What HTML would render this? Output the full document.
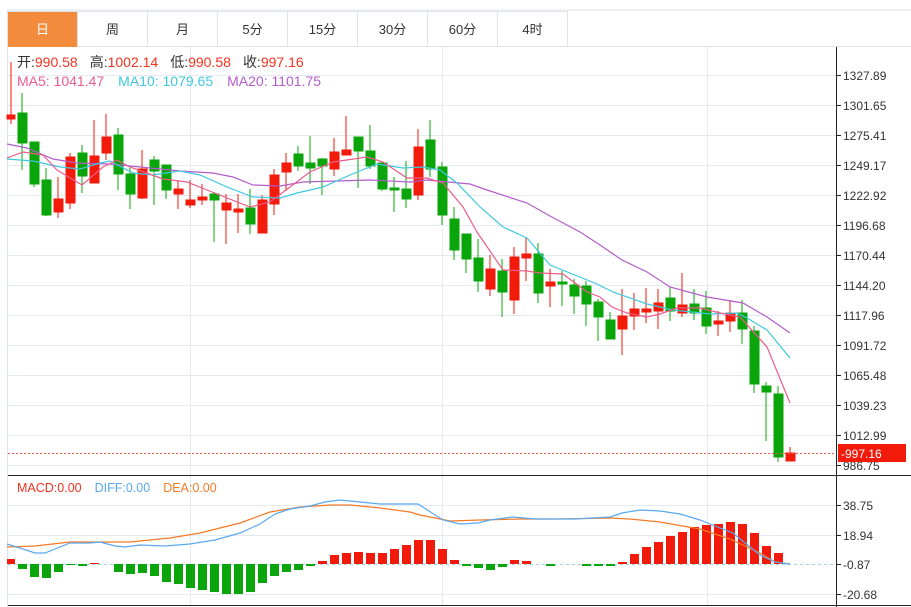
<!DOCTYPE html>
<html><head><meta charset="utf-8"><style>
html,body{margin:0;padding:0;background:#fff;width:911px;height:607px;overflow:hidden;font-family:"Liberation Sans","Noto Sans CJK SC",sans-serif}
.tabs{position:absolute;left:8px;top:11px;height:35px;display:flex;border-top:1px solid #dde3ea}
.tab{width:69px;height:35px;line-height:35px;text-align:center;font-size:13px;color:#333;border-right:1px solid #dde3ea}
.tab.on{background:#f28b3c;color:#fff}
</style></head><body>
<svg width="911" height="607" style="position:absolute;left:0;top:0">
<line x1="7" y1="10" x2="911" y2="10" stroke="#dde3ea"/>
<line x1="7.5" y1="10" x2="7.5" y2="607" stroke="#dde3ea"/>
<line x1="8" y1="46.5" x2="911" y2="46.5" stroke="#dde3ea"/>
<g stroke="#e3eaf1" stroke-width="1">
<line x1="190.5" y1="47" x2="190.5" y2="605"/><line x1="442.5" y1="47" x2="442.5" y2="605"/><line x1="707.5" y1="47" x2="707.5" y2="605"/>
<line x1="8" y1="75.5" x2="836" y2="75.5"/><line x1="8" y1="105.5" x2="836" y2="105.5"/><line x1="8" y1="135.5" x2="836" y2="135.5"/><line x1="8" y1="165.5" x2="836" y2="165.5"/><line x1="8" y1="195.5" x2="836" y2="195.5"/><line x1="8" y1="225.5" x2="836" y2="225.5"/><line x1="8" y1="255.5" x2="836" y2="255.5"/><line x1="8" y1="285.5" x2="836" y2="285.5"/><line x1="8" y1="315.5" x2="836" y2="315.5"/><line x1="8" y1="345.5" x2="836" y2="345.5"/><line x1="8" y1="375.5" x2="836" y2="375.5"/><line x1="8" y1="405.5" x2="836" y2="405.5"/><line x1="8" y1="435.5" x2="836" y2="435.5"/><line x1="8" y1="465.5" x2="836" y2="465.5"/>
<line x1="8" y1="505.5" x2="836" y2="505.5"/><line x1="8" y1="535.5" x2="836" y2="535.5"/><line x1="8" y1="594.5" x2="836" y2="594.5"/>
</g>
<g id="c">
<g fill="#f21a0a" stroke="#f21a0a">
<line x1="11" y1="62" x2="11" y2="124"/><rect x="7" y="115" width="8" height="4"/>
<line x1="58" y1="177" x2="58" y2="218"/><rect x="54" y="199" width="9" height="13"/>
<line x1="70" y1="153" x2="70" y2="209"/><rect x="66" y="157" width="9" height="46"/>
<line x1="94" y1="120" x2="94" y2="183"/><rect x="90" y="156" width="9" height="27"/>
<line x1="106" y1="114" x2="106" y2="160"/><rect x="102" y="137" width="9" height="16"/>
<line x1="142" y1="150" x2="142" y2="199"/><rect x="138" y="169" width="9" height="29"/>
<line x1="178" y1="180" x2="178" y2="209"/><rect x="174" y="189" width="9" height="5"/>
<line x1="190" y1="180" x2="190" y2="208"/><rect x="186" y="200" width="9" height="5"/>
<line x1="202" y1="184" x2="202" y2="205"/><rect x="198" y="197" width="9" height="3"/>
<line x1="226" y1="194" x2="226" y2="244"/><rect x="222" y="203" width="9" height="7"/>
<line x1="238" y1="194" x2="238" y2="233"/><rect x="234" y="209" width="9" height="3"/>
<line x1="262" y1="195" x2="262" y2="233"/><rect x="258" y="200" width="9" height="33"/>
<line x1="274" y1="169" x2="274" y2="215"/><rect x="270" y="175" width="9" height="29"/>
<line x1="286" y1="153" x2="286" y2="191"/><rect x="282" y="163" width="9" height="9"/>
<line x1="334" y1="138" x2="334" y2="176"/><rect x="330" y="152" width="9" height="17"/>
<line x1="346" y1="116" x2="346" y2="155"/><rect x="342" y="150" width="9" height="5"/>
<line x1="418" y1="129" x2="418" y2="200"/><rect x="414" y="147" width="9" height="48"/>
<line x1="490" y1="255" x2="490" y2="296"/><rect x="486" y="269" width="9" height="20"/>
<line x1="514" y1="247" x2="514" y2="314"/><rect x="510" y="257" width="9" height="43"/>
<line x1="526" y1="237" x2="526" y2="281"/><rect x="522" y="254" width="9" height="4"/>
<line x1="550" y1="269" x2="550" y2="307"/><rect x="546" y="282" width="9" height="4"/>
<line x1="622" y1="289" x2="622" y2="355"/><rect x="618" y="316" width="9" height="13"/>
<line x1="634" y1="293" x2="634" y2="330"/><rect x="630" y="309" width="9" height="7"/>
<line x1="646" y1="288" x2="646" y2="323"/><rect x="642" y="309" width="9" height="3"/>
<line x1="658" y1="289" x2="658" y2="329"/><rect x="654" y="303" width="9" height="8"/>
<line x1="682" y1="273" x2="682" y2="317"/><rect x="678" y="305" width="9" height="8"/>
<line x1="718" y1="311" x2="718" y2="336"/><rect x="714" y="321" width="9" height="3"/>
<line x1="730" y1="300" x2="730" y2="332"/><rect x="726" y="313" width="9" height="8"/>
<line x1="790" y1="447" x2="790" y2="461"/><rect x="786" y="453" width="9" height="8"/>
</g>
<g fill="#0aa50a" stroke="#0aa50a">
<line x1="22" y1="93" x2="22" y2="170"/><rect x="18" y="113" width="9" height="30"/>
<line x1="34" y1="142" x2="34" y2="187"/><rect x="30" y="142" width="9" height="42"/>
<line x1="46" y1="168" x2="46" y2="216"/><rect x="42" y="180" width="9" height="35"/>
<line x1="82" y1="145" x2="82" y2="193"/><rect x="78" y="153" width="9" height="23"/>
<line x1="118" y1="128" x2="118" y2="190"/><rect x="114" y="135" width="9" height="39"/>
<line x1="130" y1="168" x2="130" y2="209"/><rect x="126" y="174" width="9" height="20"/>
<line x1="154" y1="156" x2="154" y2="205"/><rect x="150" y="160" width="9" height="11"/>
<line x1="166" y1="165" x2="166" y2="199"/><rect x="162" y="165" width="9" height="25"/>
<line x1="214" y1="192" x2="214" y2="242"/><rect x="210" y="194" width="9" height="6"/>
<line x1="250" y1="189" x2="250" y2="234"/><rect x="246" y="208" width="9" height="16"/>
<line x1="298" y1="146" x2="298" y2="171"/><rect x="294" y="154" width="9" height="12"/>
<line x1="310" y1="136" x2="310" y2="184"/><rect x="306" y="163" width="9" height="5"/>
<line x1="322" y1="158" x2="322" y2="195"/><rect x="318" y="159" width="9" height="7"/>
<line x1="358" y1="137" x2="358" y2="188"/><rect x="354" y="137" width="9" height="14"/>
<line x1="370" y1="125" x2="370" y2="169"/><rect x="366" y="151" width="9" height="15"/>
<line x1="382" y1="163" x2="382" y2="191"/><rect x="378" y="163" width="9" height="26"/>
<line x1="394" y1="177" x2="394" y2="212"/><rect x="390" y="188" width="9" height="2"/>
<line x1="406" y1="161" x2="406" y2="208"/><rect x="402" y="189" width="9" height="10"/>
<line x1="430" y1="120" x2="430" y2="177"/><rect x="426" y="140" width="9" height="29"/>
<line x1="442" y1="162" x2="442" y2="225"/><rect x="438" y="167" width="9" height="48"/>
<line x1="454" y1="207" x2="454" y2="260"/><rect x="450" y="219" width="9" height="31"/>
<line x1="466" y1="234" x2="466" y2="273"/><rect x="462" y="234" width="9" height="25"/>
<line x1="478" y1="239" x2="478" y2="292"/><rect x="474" y="258" width="9" height="23"/>
<line x1="502" y1="259" x2="502" y2="317"/><rect x="498" y="271" width="9" height="21"/>
<line x1="538" y1="243" x2="538" y2="303"/><rect x="534" y="254" width="9" height="39"/>
<line x1="562" y1="271" x2="562" y2="306"/><rect x="558" y="282" width="9" height="2"/>
<line x1="574" y1="279" x2="574" y2="314"/><rect x="570" y="285" width="9" height="11"/>
<line x1="586" y1="281" x2="586" y2="326"/><rect x="582" y="286" width="9" height="18"/>
<line x1="598" y1="299" x2="598" y2="341"/><rect x="594" y="302" width="9" height="15"/>
<line x1="610" y1="312" x2="610" y2="339"/><rect x="606" y="320" width="9" height="19"/>
<line x1="670" y1="287" x2="670" y2="321"/><rect x="666" y="298" width="9" height="13"/>
<line x1="694" y1="289" x2="694" y2="320"/><rect x="690" y="304" width="9" height="9"/>
<line x1="706" y1="291" x2="706" y2="334"/><rect x="702" y="308" width="9" height="18"/>
<line x1="742" y1="300" x2="742" y2="344"/><rect x="738" y="313" width="9" height="16"/>
<line x1="754" y1="326" x2="754" y2="393"/><rect x="750" y="331" width="9" height="53"/>
<line x1="766" y1="382" x2="766" y2="441"/><rect x="762" y="386" width="9" height="6"/>
<line x1="778" y1="386" x2="778" y2="462"/><rect x="774" y="394" width="9" height="63"/>
</g>
</g>
<g fill="none" stroke-width="1.2">
<polyline stroke="#b45ccb" points="7,144 27,148 53,159 77,163 110,164 140,167 180,171 213,173 233,177 253,185 280,186 303,182 370,180 410,182 427,180 470,184 487,190 527,203 550,216 580,232 600,245 622,260 647,272 670,287 707,297 743,303 767,317 790,333"/>
<polyline stroke="#3ec8dd" points="7,159 33,161 60,167 80,169 100,163 110,161 133,173 153,175 180,171 200,175 227,187 253,197 280,198 297,193 323,187 350,175 377,164 403,168 423,167 440,170 457,183 480,207 503,227 527,238 550,265 597,284 613,292 647,304 673,310 710,314 737,313 747,318 767,330 790,358"/>
<polyline stroke="#ec5c8c" points="7,158 23,152 43,155 57,170 82,185 103,167 117,160 130,167 163,179 187,182 207,190 250,207 270,202 290,187 310,172 333,162 367,157 383,162 407,178 427,178 443,183 463,207 477,232 503,270 527,271 540,273 563,274 587,292 600,297 612,307 627,313 647,317 660,314 677,308 700,308 720,313 740,317 767,347 790,403"/>
</g>
<line x1="8" y1="453.5" x2="836" y2="453.5" stroke="#f0554a" stroke-dasharray="2,2"/>
<line x1="8" y1="564.5" x2="836" y2="564.5" stroke="#9fd3ea" stroke-dasharray="3,3"/>
<g fill="#f21a0a">
<rect x="7" y="559" width="8" height="5"/><rect x="90" y="563" width="9" height="1"/>
<rect x="318" y="561" width="9" height="3"/><rect x="330" y="555" width="9" height="9"/><rect x="342" y="553" width="9" height="11"/><rect x="354" y="552" width="9" height="12"/><rect x="366" y="553" width="9" height="11"/><rect x="378" y="553" width="9" height="11"/><rect x="390" y="549" width="9" height="15"/><rect x="402" y="545" width="9" height="19"/><rect x="414" y="540" width="9" height="24"/><rect x="426" y="540" width="9" height="24"/><rect x="438" y="549" width="9" height="15"/><rect x="450" y="560" width="9" height="4"/>
<rect x="510" y="560" width="9" height="4"/><rect x="522" y="561" width="9" height="3"/>
<rect x="618" y="562" width="9" height="2"/><rect x="630" y="554" width="9" height="10"/><rect x="642" y="547" width="9" height="17"/><rect x="654" y="542" width="9" height="22"/><rect x="666" y="536" width="9" height="28"/><rect x="678" y="532" width="9" height="32"/><rect x="690" y="527" width="9" height="37"/><rect x="702" y="525" width="9" height="39"/><rect x="714" y="524" width="9" height="40"/><rect x="726" y="522" width="9" height="42"/><rect x="738" y="524" width="9" height="40"/><rect x="750" y="533" width="9" height="31"/><rect x="762" y="546" width="9" height="18"/><rect x="774" y="553" width="9" height="11"/>
</g>
<g fill="#0aa50a">
<rect x="18" y="564" width="9" height="5"/><rect x="30" y="564" width="9" height="13"/><rect x="42" y="564" width="9" height="14"/><rect x="54" y="564" width="9" height="8"/><rect x="66" y="564" width="9" height="1"/><rect x="78" y="564" width="9" height="2"/>
<rect x="114" y="564" width="9" height="8"/><rect x="126" y="564" width="9" height="10"/><rect x="138" y="564" width="9" height="9"/><rect x="150" y="564" width="9" height="12"/><rect x="162" y="564" width="9" height="18"/><rect x="174" y="564" width="9" height="20"/><rect x="186" y="564" width="9" height="24"/><rect x="198" y="564" width="9" height="26"/><rect x="210" y="564" width="9" height="28"/><rect x="222" y="564" width="9" height="30"/><rect x="234" y="564" width="9" height="30"/><rect x="246" y="564" width="9" height="28"/><rect x="258" y="564" width="9" height="19"/><rect x="270" y="564" width="9" height="12"/><rect x="282" y="564" width="9" height="8"/><rect x="294" y="564" width="9" height="6"/><rect x="306" y="564" width="9" height="2"/>
<rect x="462" y="564" width="9" height="2"/><rect x="474" y="564" width="9" height="4"/><rect x="486" y="564" width="9" height="6"/><rect x="498" y="564" width="9" height="3"/><rect x="546" y="564" width="9" height="2"/><rect x="582" y="564" width="9" height="2"/><rect x="594" y="564" width="9" height="2"/><rect x="606" y="564" width="9" height="2"/>
</g>
<g fill="none" stroke-width="1.2">
<polyline stroke="#f47a26" points="7,547 35,546 70,542 100,542 130,542 170,538 200,533 240,523 270,512 300,507 330,505 350,505 380,508 410,512 420,515 450,521 480,520 520,519 560,519 610,518 630,519 660,522 700,529 730,539 760,553 775,562 790,564"/>
<polyline stroke="#5aa9f0" points="7,544 20,548 35,553 45,553 55,549 70,543 90,543 100,542 115,546 125,547 140,545 165,546 190,544 215,540 240,533 260,524 275,514 290,509 310,506 325,502 340,500 350,501 380,504 418,504 443,520 460,524 478,523 490,520 513,517 535,519 575,519 610,517 622,513 640,510 660,511 680,514 700,520 720,528 733,533 750,547 760,555 775,562 790,564"/>
</g>
<line x1="8" y1="475.5" x2="911" y2="475.5" stroke="#222"/>
<line x1="8" y1="605.5" x2="911" y2="605.5" stroke="#222"/>
<line x1="836.5" y1="47" x2="836.5" y2="607" stroke="#222"/>
<g stroke="#222"><line x1="836" y1="75.5" x2="841" y2="75.5"/><line x1="836" y1="105.5" x2="841" y2="105.5"/><line x1="836" y1="135.5" x2="841" y2="135.5"/><line x1="836" y1="165.5" x2="841" y2="165.5"/><line x1="836" y1="195.5" x2="841" y2="195.5"/><line x1="836" y1="225.5" x2="841" y2="225.5"/><line x1="836" y1="255.5" x2="841" y2="255.5"/><line x1="836" y1="285.5" x2="841" y2="285.5"/><line x1="836" y1="315.5" x2="841" y2="315.5"/><line x1="836" y1="345.5" x2="841" y2="345.5"/><line x1="836" y1="375.5" x2="841" y2="375.5"/><line x1="836" y1="405.5" x2="841" y2="405.5"/><line x1="836" y1="435.5" x2="841" y2="435.5"/><line x1="836" y1="465.5" x2="841" y2="465.5"/><line x1="836" y1="505.5" x2="841" y2="505.5"/><line x1="836" y1="535.5" x2="841" y2="535.5"/><line x1="836" y1="564.5" x2="841" y2="564.5"/><line x1="836" y1="594.5" x2="841" y2="594.5"/></g>
<g font-size="12" fill="#333" font-family="Liberation Sans, sans-serif">
<text x="843" y="80">1327.89</text><text x="843" y="110">1301.65</text><text x="843" y="140">1275.41</text><text x="843" y="170">1249.17</text><text x="843" y="200">1222.92</text><text x="843" y="230">1196.68</text><text x="843" y="260">1170.44</text><text x="843" y="290">1144.20</text><text x="843" y="320">1117.96</text><text x="843" y="350">1091.72</text><text x="843" y="380">1065.48</text><text x="843" y="410">1039.23</text><text x="843" y="440">1012.99</text><text x="843" y="470">986.75</text>
<text x="843" y="510">38.75</text><text x="843" y="540">18.94</text><text x="843" y="569">-0.87</text><text x="843" y="599">-20.68</text>
</g>
<rect x="838" y="444" width="68" height="18" fill="#f21a0a"/>
<text x="841" y="458" font-size="12" fill="#fff" font-family="Liberation Sans, sans-serif">-997.16</text>
<g font-size="14" font-family="Liberation Sans, Noto Sans CJK SC, sans-serif">
<text x="17" y="67"><tspan fill="#333">开:</tspan><tspan fill="#f2331f">990.58</tspan><tspan fill="#333" dx="12">高:</tspan><tspan fill="#f2331f">1002.14</tspan><tspan fill="#333" dx="12">低:</tspan><tspan fill="#f2331f">990.58</tspan><tspan fill="#333" dx="12">收:</tspan><tspan fill="#f2331f">997.16</tspan></text>
<text x="17" y="86"><tspan fill="#ec5c8c">MA5: 1041.47</tspan><tspan fill="#3ec8dd" dx="14">MA10: 1079.65</tspan><tspan fill="#b45ccb" dx="14">MA20: 1101.75</tspan></text>
<text x="17" y="492" font-size="12.5"><tspan fill="#f2331f">MACD:0.00</tspan><tspan fill="#5aa9f0" dx="13">DIFF:0.00</tspan><tspan fill="#f47a26" dx="13">DEA:0.00</tspan></text>
</g>
</svg>
<div class="tabs"><div class="tab on">日</div><div class="tab">周</div><div class="tab">月</div><div class="tab">5分</div><div class="tab">15分</div><div class="tab">30分</div><div class="tab">60分</div><div class="tab">4时</div></div>
</body></html>
